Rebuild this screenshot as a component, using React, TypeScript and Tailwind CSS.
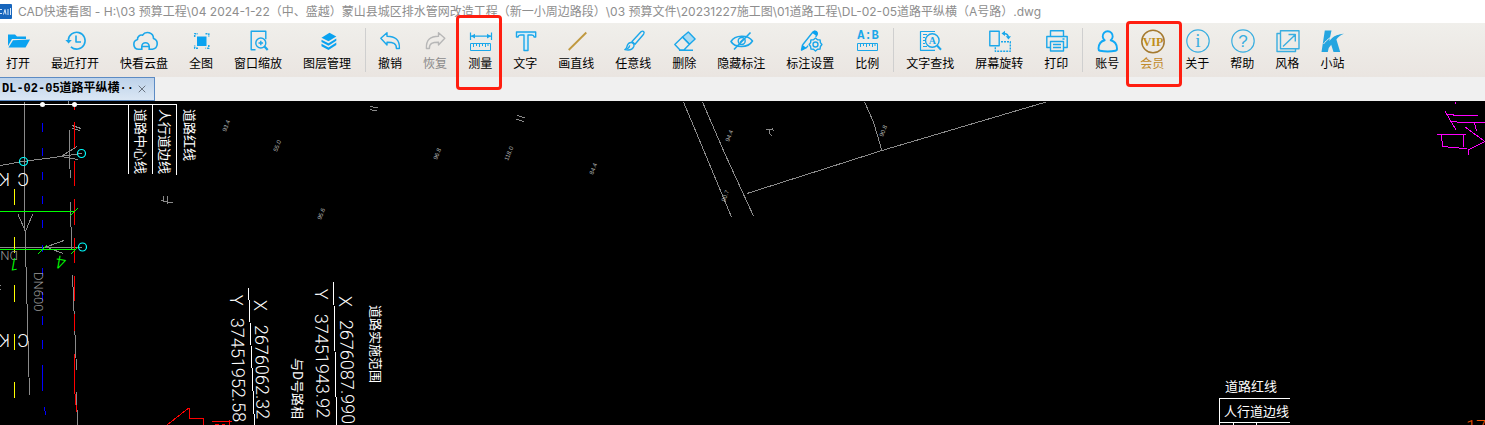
import React from "react";
import { X } from "lucide-react";

interface Tool {
  label: string;
  icon: React.ReactNode;
  tone?: "disabled" | "vip";
  mark?: "measure" | "vip";
}

const BLUE = "#1ba7ea";
const SKY = "#3aaee0";

function Icon({ children, color = BLUE }: { children: React.ReactNode; color?: string }) {
  return (
    <svg
      viewBox="0 0 24 24"
      fill="none"
      stroke={color}
      strokeWidth="1.4"
      strokeLinejoin="round"
      className="block h-6 w-6 overflow-visible"
      aria-hidden="true"
    >
      {children}
    </svg>
  );
}

const Ruler = () => (
  <path d="M2.5 14.5h20v7h-20zM5.5 15v3M8.5 15v2M11.5 15v3M14.5 15v2M17.5 15v3M20 15v2" strokeWidth="1" />
);

const fileTools: Tool[] = [
  {
    label: "打开",
    icon: (
      <Icon>
        <path d="M2 17V5.5h7l2 2h9V10H6z" fill="#0aa2f0" stroke="none" />
        <path d="M7 11.2 24 10.6 19.5 18.5H2.5z" fill="#0aa2f0" stroke="none" />
      </Icon>
    ),
  },
  {
    label: "最近打开",
    icon: (
      <Icon>
        <path d="M5.3 11.5a8.4 8.4 0 1 1 2.6 6.3M13 6.5v6.5h5" strokeWidth="1.6" />
        <path d="M2.4 11h6.4l-3.2 3.6z" fill={BLUE} stroke="none" />
      </Icon>
    ),
  },
  {
    label: "快看云盘",
    icon: (
      <Icon>
        <path d="M9 20.3H6.5a5 5 0 0 1-1-9.8 4 4 0 0 1 5-4.3 6 6 0 0 1 11 3.3 5.6 5.6 0 0 1-1 10.8H18" strokeWidth="1.6" />
        <path d="M9.8 21v-3.5a3.7 3.7 0 0 1 7.4 0V21M10 17.5h7" strokeWidth="1.6" />
      </Icon>
    ),
  },
  {
    label: "全图",
    icon: (
      <Icon>
        <rect x="8" y="7.5" width="9.5" height="9.5" fill="#0aa2f0" stroke="none" />
        <path d="M5.700 8V4.700H9M16.500 4.700h3.300V8M19.800 16v3.300h-3.300M9 19.300H5.700V16" strokeWidth="1.500" strokeDasharray="2 1" />
      </Icon>
    ),
  },
  {
    label: "窗口缩放",
    icon: (
      <Icon>
        <path d="M9.5 20.8H5.2V2.2h14.6v8" />
        <circle cx="14.8" cy="14" r="5" />
        <path d="M12.5 14h4.6M14.8 11.7v4.6" />
        <path d="m18.5 17.5 3.2 3.4" strokeWidth="2.2" />
      </Icon>
    ),
  },
  {
    label: "图层管理",
    icon: (
      <Icon>
        <g fill="#0aa2f0" stroke="none">
          <path d="m14.5 3.8 6.8 3.6-7.8 4.8-7-3.5z" />
          <path d="m6.5 10.7 7 3.6 7.8-4.9v2.4l-7.8 5-7-3.7z" />
          <path d="m6.5 14.8 7 3.6 7.8-4.9v2.4l-7.8 5.2-7-3.8z" />
        </g>
      </Icon>
    ),
  },
];

const editTools: Tool[] = [
  {
    label: "撤销",
    icon: (
      <Icon>
        <path d="m2.8 9.3 6.2-5.5v3.5c8 0 12.8 3.2 12.4 12.2h-3c.2-5-3.4-6.4-9.4-6.3V16z" />
      </Icon>
    ),
  },
  {
    label: "恢复",
    tone: "disabled",
    icon: (
      <Icon color="#b7b7b7">
        <path d="M21.8 9.3 15.5 3.8v3.5C7.5 7.3 3 10.5 3.4 19.5h3c-.2-5 3.1-6.4 9.1-6.3V16z" />
      </Icon>
    ),
  },
  {
    label: "测量",
    mark: "measure",
    icon: (
      <Icon>
        <path d="M2.5 3.5v7.5M23.5 3.5v7.5M3 7.2h20" strokeWidth="1.2" />
        <path d="m3 7.2 4-2.4v4.8zM23 7.2l-4-2.4v4.8z" fill={BLUE} stroke="none" />
        <Ruler />
      </Icon>
    ),
  },
  {
    label: "文字",
    icon: (
      <Icon>
        <path d="M3.5 3h19.2v5h-1.500c-.3-1.600-1-2-2.500-2H15v15.500h-4V6H7.500C6 6 5.300 6.400 5 8H3.500z" fill="#d6edf8" />
      </Icon>
    ),
  },
  {
    label: "画直线",
    icon: (
      <Icon color="#c0993f">
        <path d="M4.700 21 22.300 3.500" strokeWidth="1.800" />
      </Icon>
    ),
  },
  {
    label: "任意线",
    icon: (
      <Icon>
        <path d="M11 12.500 20 2.800c2-1.700 4 .400 2.600 2.400L14 15.200z" />
        <path d="M10.500 13.500c2 .4 3 2 2.300 4C11.700 20.300 8 21.500 3.800 20.600c2.600-.900 1.700-3.100 3-5.200.8-1.300 2.100-2.100 3.700-1.900z" />
        <path d="M8.700 16.300c-.2 1.800-1 2.700-2.600 3.500" />
      </Icon>
    ),
  },
  {
    label: "删除",
    icon: (
      <Icon>
        <path d="m10.500 8 5.800-5 6.800 7-5.600 5.300z" fill="#a9daf2" />
        <path d="m10.500 8 7 7.300-5.600 5.700H8l-5.200-5.600zM7 21.300h14" />
      </Icon>
    ),
  },
  {
    label: "隐藏标注",
    icon: (
      <Icon>
        <path d="M2 12.500c4-7 17-7 21.500-.5-4.500 7.300-17.500 7.300-21.500.5z" strokeWidth="1.600" />
        <circle cx="12.700" cy="12" r="3.500" />
        <path d="M5 20.500 21.500 3.500" strokeWidth="1.600" />
        <path d="m11 13.500 3-3" />
      </Icon>
    ),
  },
  {
    label: "标注设置",
    icon: (
      <Icon>
        <path d="m4.500 16 10-12.500c1.500-2 5.500-1 4.700 2l-1.500 2.300M4.500 16 3.500 21l5-2.300 1.500-2" />
        <path d="m14 3.800 1.500-1.800c2-1.200 4.500.3 3.900 2.600L18.500 7zM4.500 16l3.800 2.800-5 2.900z" fill="#0aa2f0" stroke="none" />
        <path d="m17.500 9 2 1.700 2.600.2.300 2.700 1.500 1.900-1.500 2-.4 2.600-2.500.2-2 1.700-2-1.700-2.500-.2-.4-2.600-1.500-2 1.500-1.900.3-2.700 2.600-.2z" />
        <circle cx="17.500" cy="15.500" r="2.500" />
      </Icon>
    ),
  },
  {
    label: "比例",
    icon: (
      <Icon>
        <text x="13" y="10" textAnchor="middle" fontSize="12" fontWeight="700" fill={BLUE} stroke="none" className="font-['Liberation_Mono',monospace]">
          A:B
        </text>
        <Ruler />
      </Icon>
    ),
  },
];

const viewTools: Tool[] = [
  {
    label: "文字查找",
    icon: (
      <Icon>
        <path d="M17 2.500H2.500v18.800H17M5 5.500h4M5 8.500h2M5 11.500h2M5 14.500h2M5 17.500h4" strokeWidth="1.200" />
        <circle cx="14.300" cy="11.500" r="6.800" />
        <path d="m19 16.500 4 4.300" strokeWidth="2" />
        <text x="14.300" y="15" textAnchor="middle" fontSize="10" fontWeight="700" fill={BLUE} stroke="none" className="font-['Liberation_Serif',serif]">
          A
        </text>
      </Icon>
    ),
  },
  {
    label: "屏幕旋转",
    icon: (
      <Icon>
        <path d="M2.800 2.200h9.400v14.600H2.800z" />
        <path d="M14 12.700h9.300v9.600H8.300V18" strokeDasharray="2 1" />
        <path d="M16.500 4.500c3 0 5 1.500 5 4.500" />
        <path d="m14.500 4.500 3.500-2.800v5.300zM21.500 10.500l-2.800-3.300h5.300z" fill={BLUE} stroke="none" />
      </Icon>
    ),
  },
  {
    label: "打印",
    icon: (
      <Icon>
        <path d="M6.500 7.500V1.800h13v5.700M6 18.500H2.800v-11h20.400v11H20" />
        <path d="M6.500 12.500h13V22h-13zM9 15.500h8M9 18.500h8M18.500 10h2" />
      </Icon>
    ),
  },
];

const userTools: Tool[] = [
  {
    label: "账号",
    icon: (
      <Icon color="#12a9f5">
        <path
          d="M9.700 11.300a5 5 0 1 1 6 0c4 .9 6.100 4.200 6.300 8.200.1 1.200-.5 2-1.500 2.200-4.800 1-10.800 1-15.600 0-1-.2-1.500-1-1.400-2.200.2-4 2.200-7.300 6.200-8.200z"
          strokeWidth="1.900"
        />
      </Icon>
    ),
  },
  {
    label: "会员",
    tone: "vip",
    mark: "vip",
    icon: (
      <Icon color="#a57a30">
        <circle cx="13" cy="12.500" r="11.200" strokeWidth="1.500" />
        <text x="13" y="16.500" textAnchor="middle" fontSize="12" fontWeight="700" fill="#c08d1c" stroke="none" className="font-['Liberation_Serif',serif]">
          VIP
        </text>
      </Icon>
    ),
  },
  {
    label: "关于",
    icon: (
      <Icon color={SKY}>
        <circle cx="13" cy="12" r="11.200" strokeWidth="1.200" />
        <text x="13" y="18" textAnchor="middle" fontSize="19" fill={SKY} stroke="none" className="font-['Liberation_Serif',serif]">
          i
        </text>
      </Icon>
    ),
  },
  {
    label: "帮助",
    icon: (
      <Icon color={SKY}>
        <circle cx="13" cy="12" r="11.200" strokeWidth="1.200" />
        <text x="13" y="18" textAnchor="middle" fontSize="17" fill={SKY} stroke="none" className="font-['Liberation_Sans',sans-serif]">
          ?
        </text>
      </Icon>
    ),
  },
  {
    label: "风格",
    icon: (
      <Icon color={SKY}>
        <path d="M5.500 1.800h18.500v18H5.500zM5.500 4.500H2v18h18.500v-2.700M8 17.500 20 6M13.500 5.500h6.800v7" />
      </Icon>
    ),
  },
  {
    label: "小站",
    icon: (
      <Icon>
        <path d="M4.800 1.500h6.700L9.300 12C13 7.500 17 5 24 4.700c-3.500 1.300-6 3.400-7.600 5.800L20.200 23h-6.700l-2.300-7.200L8.700 19l-.9 4H1.500z" fill="#25a5e0" stroke="none" />
        <path d="M3.500 15c3.500-4.500 9-9 15-9.800" stroke="#efedea" strokeWidth="1" />
      </Icon>
    ),
  },
];

function ToolButton({ tool }: { tool: Tool }) {
  return (
    <button
      type="button"
      disabled={tool.tone === "disabled"}
      className={`relative flex shrink-0 flex-col items-center gap-[3px] text-xs leading-4 whitespace-nowrap ${
        tool.tone === "vip" ? "text-[#c08a2a]" : tool.tone === "disabled" ? "text-[#8b8b8b]" : "text-black"
      }`}
    >
      {tool.icon}
      <span>{tool.label}</span>
      {tool.mark === "measure" && (
        <span className="pointer-events-none absolute -top-3.5 -right-2.5 -left-3 z-10 h-[75px] rounded-sm border-[3px] border-[#ff1e10]" />
      )}
      {tool.mark === "vip" && (
        <span className="pointer-events-none absolute -top-2 -right-[18px] -left-3.5 z-10 h-[66px] rounded-sm border-[3px] border-[#ff1e10]" />
      )}
    </button>
  );
}

function ToolGroup({ tools }: { tools: Tool[] }) {
  return (
    <div className="flex gap-[21px]">
      {tools.map((tool) => (
        <ToolButton key={tool.label} tool={tool} />
      ))}
    </div>
  );
}

const Divider = () => <div className="-mt-px mr-3 ml-3.5 h-11 w-px shrink-0 bg-[#cfcfcf]" />;

// [x, y, length] runs of the vertical dashed lines
const blueDashes = [[42, 123, 9], [42, 148, 8], [42, 172, 8], [42, 196, 8], [42, 220, 8], [42, 245, 7], [42, 268, 8], [42, 292, 9], [42, 316, 9], [42, 340, 9], [42, 365, 26], [44, 407, 4], [45, 411, 4]];
const redDashes = [[74, 107, 3], [74, 122, 26], [74, 161, 25], [74, 199, 26], [74, 238, 25], [74, 276, 25], [74, 314, 17], [74, 354, 40], [75, 394, 11], [76, 405, 7]];
const yellowDashes = [[14, 189, 16], [14, 237, 16], [14, 285, 17], [14, 334, 16], [14, 382, 16]];

// spot heights: [x, y, value]
const spots: [number, number, string][] = [
  [226, 132, "93.4"],
  [277, 152, "55.0"],
  [437, 160, "96.8"],
  [508, 161, "118.0"],
  [593, 175, "84.4"],
  [321, 220, "95.6"],
  [729, 142, "94.4"],
  [883, 137, "90.8"],
  [725, 202, "90.7"],
];

const sideways: [number, number, string][] = [
  [136, 109, "道路中心线"],
  [160, 109, "人行道边线"],
  [185, 109, "道路红线"],
  [371, 305, "道路实施范围"],
  [293, 358, "与D号路相"],
];

const coords: [number, number, string][] = [
  [254, 300, "X"],
  [255, 325, "2676062.32"],
  [230, 295, "Y"],
  [231, 318, "37451952.58"],
  [339, 296, "X"],
  [340, 320, "2676087.990"],
  [315, 289, "Y"],
  [315, 314, "37451943.92"],
];

function Dashes({ runs, color }: { runs: number[][]; color: string }) {
  return (
    <g fill={color}>
      {runs.map(([x, y, h]) => (
        <rect key={y} x={x} y={y} width="1" height={h} />
      ))}
    </g>
  );
}

function Drawing() {
  return (
    <svg viewBox="0 101 1485 324" fill="none" className="block w-full bg-black" role="img" aria-label="DL-02-05道路平纵横">
      <g stroke="#8a8a8a" shapeRendering="crispEdges">
        <path d="M24.500 102v109l5 184" />
        <path d="M0 165.500 23 161.500 61 156.500 82 153.500M77 146.500l-16 10 17 3" />
        <path d="M69.500 130v30l1 18M70.500 202l1 48M72.500 275l4 95M76.500 392l1 33M68.500 101v4" />
        <path d="M72 125.500l9 3M72 128.500l8 2M18 214.500l7.500 17 7-17" />
        <path d="M0 247.500h82M64 240.500l-18 6.500 17 6.500" />
        <path d="M161 200.500l12 2.500M163 196v6M168 196l-1 8M0 285.500h1M0 289.500h1" />
        <path d="M683.500 102l48 115M702.500 102l22 51 29 63M747 193.500l135-43 164-48.500M864.500 102l9 20 8.500 29" />
        <path d="M370 106.500l8 1.500M370 109.500l7 1.500M517 115.500l8 2.500M516 119l8 2.500" />
        <path d="M766 129l7 1-1-2M770 130l-1 3 3 3" />
      </g>

      <Dashes runs={blueDashes} color="#0000ff" />
      <Dashes runs={redDashes} color="#ff0000" />
      <Dashes runs={yellowDashes} color="#ffff00" />

      <g stroke="#00ff00" shapeRendering="crispEdges">
        <path d="M0 211.500h75M0 249.500h76M70 216l8-8M38 254l9-9M71 254l8-8" />
      </g>
      <g stroke="#ffffff" shapeRendering="crispEdges">
        <path d="M0 104.500h177M128.500 104v70M152.500 104v70M176.500 104v71" />
        <path d="M248.500 288l6 137M333.500 282l3 137v6" />
        <path d="M1219.500 425v-26.500h70.500M1219 422.500h71M1233.500 423v2M1256.500 423v2" />
      </g>
      <g fill="#ffffff">
        <circle cx="42.500" cy="104.500" r="2.500" />
        <circle cx="74.500" cy="104.500" r="2.500" />
      </g>
      <g stroke="#00ffff" strokeWidth="1.200">
        <circle cx="23.500" cy="161.500" r="4" />
        <circle cx="81.500" cy="153.500" r="4" />
        <circle cx="82.500" cy="247" r="4" />
      </g>
      <g stroke="#ff0000" shapeRendering="crispEdges">
        <path d="M167 425l21-16.500h1.500v10h14v6.500M212 421.500h20M215 424.500h4M222 424.500h3M229 420v5" />
      </g>
      <g stroke="#ff00ff" shapeRendering="crispEdges">
        <path d="M1455.500 102v2M1445 111l11 19M1447 114.500h6l1 1h24M1452 121.500l9 1h24M1474.500 123l2 8" />
        <path d="M1465 127l20 14.500-16 8-.5 5.500M1437 134.500h29M1441.500 134.500l1 13M1442 146.500l17 1.500 8 1M1463 135l1 12" />
      </g>

      <g fill="#b4b4b4" fontSize="6" className="font-['Liberation_Sans',sans-serif]">
        {spots.map(([x, y, value]) => (
          <text key={x} transform={`translate(${x} ${y}) rotate(-68)`}>
            {value}
          </text>
        ))}
      </g>

      <g fill="#ffffff" fontSize="13" className="font-['Noto_Sans_CJK_SC',sans-serif]">
        {sideways.map(([x, y, value]) => (
          <text key={value} transform={`translate(${x} ${y}) rotate(90)`}>
            {value}
          </text>
        ))}
        <text x="1225" y="391">道路红线</text>
        <text x="1224" y="416">人行道边线</text>
      </g>

      <g fill="#ffffff" fontSize="18" fontWeight="300" className="font-['Roboto',sans-serif]">
        {coords.map(([x, y, value]) => (
          <text key={`${x}-${y}`} transform={`translate(${x} ${y}) rotate(89)`}>
            {value}
          </text>
        ))}
        <text transform="translate(29 173) rotate(180)">C</text>
        <text transform="translate(10 173) rotate(180)">K</text>
        <text transform="translate(29 334) rotate(180)">C</text>
        <text transform="translate(10 334) rotate(180)">K</text>
      </g>
      <g fill="#9a9a9a" fontSize="13" fontWeight="300" className="font-['Roboto',sans-serif]">
        <text transform="translate(34 272) rotate(90)">DN600</text>
        <text transform="translate(18 251) rotate(180)">DN</text>
      </g>
      <g fill="#00ff00" fontSize="18" fontWeight="300" className="font-['Roboto',sans-serif]">
        <text transform="translate(67 257) rotate(190)">4</text>
        <text transform="translate(20 259) rotate(190)">1</text>
      </g>
      <text x="1466" y="433" fontSize="18" fontWeight="300" fill="#f05000" className="font-['Roboto',sans-serif]">
        17
      </text>
    </svg>
  );
}

export default function App() {
  return (
    <div className="w-full overflow-hidden bg-[#f0f0f0] font-['Liberation_Sans','Noto_Sans_CJK_SC',sans-serif]">
      <header className="flex h-[23px] items-center gap-1.5 bg-white text-xs whitespace-nowrap text-[#8e8e8e] font-['Inter','Noto_Sans_CJK_SC',sans-serif]">
        <svg viewBox="0 0 12 15" className="h-[15px] w-3 shrink-0" aria-hidden="true">
          <path d="M0 0h11a1 1 0 0 1 1 1v13a1 1 0 0 1-1 1H0z" fill="#1766bd" />
          <path d="M0 5.500h2M0 9.500h2M3.500 10.500l1.500-5 1 5M8 5v6M10.500 4v7" fill="none" stroke="#d7e8fa" />
        </svg>
        <h1>{"CAD快速看图 - H:\\03 预算工程\\04 2024-1-22（中、盛越）蒙山县城区排水管网改造工程（新一小周边路段）\\03 预算文件\\20231227施工图\\01道路工程\\DL-02-05道路平纵横（A号路）.dwg"}</h1>
      </header>

      <nav className="flex h-[54px] bg-linear-to-b from-[#f0efeb] to-[#eae5e1] pt-1.5 pl-1.5">
        <ToolGroup tools={fileTools} />
        <Divider />
        <ToolGroup tools={editTools} />
        <Divider />
        <ToolGroup tools={viewTools} />
        <Divider />
        <ToolGroup tools={userTools} />
      </nav>

      <div className="flex h-6 bg-[#f0f0f0]">
        <div className="flex w-[155px] items-center justify-between border border-l-0 border-[#5c8bc4] bg-linear-to-b from-[#bdd2ea] to-[#dbe7f4] pr-1.5 pl-0.5">
          <button type="button" className="text-xs font-bold whitespace-nowrap text-black font-['Liberation_Mono','Noto_Sans_CJK_SC',monospace]">
            DL-02-05道路平纵横··
          </button>
          <button type="button" aria-label="关闭" className="text-[#6b7480]">
            <X className="h-3 w-3" />
          </button>
        </div>
      </div>

      <main>
        <Drawing />
      </main>
    </div>
  );
}
